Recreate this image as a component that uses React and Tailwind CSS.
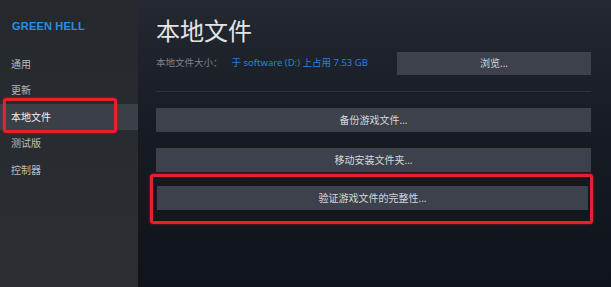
export default function App() {
  const font = { fontFamily: '"Noto Sans", "Noto Sans CJK SC", sans-serif' };
  const navs = ["通用", "更新", "本地文件", "测试版", "控制器"];
  return (
    <div
      className="w-[611px] h-[287px] flex overflow-hidden"
      style={font}
    >
      <div className="w-[138px] h-full bg-gradient-to-b from-[#25282d] to-[#2b2e33] flex flex-col">
        <div className="pl-[12px] pt-[19px] h-[50.75px] text-[11px] leading-[14px] font-bold text-[#2b8ee0] tracking-[0.2px]" style={{ fontFamily: '"Liberation Sans", "Noto Sans", sans-serif' }}>
          GREEN HELL
        </div>
        {navs.map((n) => {
          const active = n === "本地文件";
          return (
            <div
              key={n}
              className={
                "relative h-[26.5px] flex items-center pl-[11px] text-[10px] " +
                (active ? "bg-[#3b3f46] text-[#f2f3f4]" : "text-[#b8bcbf]")
              }
            >
              {n}
              {active && (
                <div className="absolute left-[3px] -top-[6px] w-[114px] h-[35px] border-[3px] border-[#e3232b] rounded-[3px] shadow-[0_0_3px_rgba(227,35,43,0.6)]" />
              )}
            </div>
          );
        })}
      </div>
      <div className="flex-1 h-full bg-gradient-to-b from-[#232831] via-[#161b22] to-[#0f141a] pl-[18px] pr-[20px] flex flex-col">
        <div className="mt-[18px] h-[26px] text-[24px] leading-[26px] text-[#e2e4e6]">本地文件</div>
        <div className="mt-[8px] h-[23px] flex items-center">
          <div className="flex-1 text-[9.5px] flex items-center">
            <span className="text-[#7d838a]">本地文件大小：</span>
            <span className="ml-[9px] text-[#2f7fd6]">于 software (D:) 上占用 7.53 GB</span>
          </div>
          <div className="w-[194px] h-[23px] bg-[#3c414b] flex items-center justify-center text-[10px] text-[#d5d8db]">
            浏览...
          </div>
        </div>
        <div className="mt-[16px] h-px bg-[#2c313a]" />
        <div className="mt-[16px] h-[24px] bg-[#3c414b] flex items-center justify-center text-[10px] text-[#d5d8db]">
          备份游戏文件...
        </div>
        <div className="mt-[16px] h-[24px] bg-[#3c414b] flex items-center justify-center text-[10px] text-[#d5d8db]">
          移动安装文件夹...
        </div>
        <div className="mt-[2px] -ml-[6px] -mr-[2px] border-[3px] border-[#e3232b] rounded-[3px] pt-[9px] pb-[11px] pl-[4px] pr-[2px] shadow-[0_0_3px_rgba(227,35,43,0.6)]">
          <div className="h-[24px] bg-[#3c414b] flex items-center justify-center text-[10px] text-[#d5d8db]">
            验证游戏文件的完整性...
          </div>
        </div>
      </div>
    </div>
  );
}
